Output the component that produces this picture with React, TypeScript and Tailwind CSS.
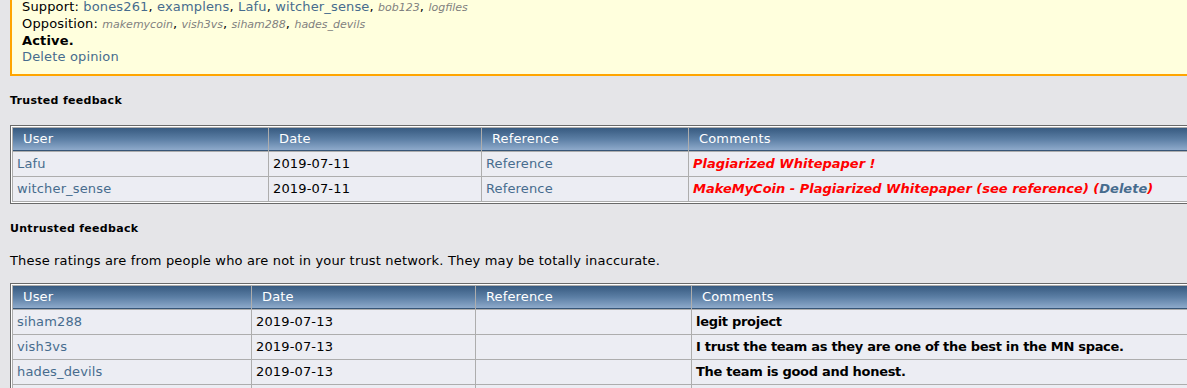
import React from "react";

const font = { fontFamily: '"DejaVu Sans", Verdana, sans-serif' };

type Row = { user: string; date: string; ref: boolean; comment: React.ReactNode };

function FeedbackTable({
  widths,
  rows,
}: {
  widths: [number, number, number, number];
  rows: Row[];
}) {
  const heads = ["User", "Date", "Reference", "Comments"];
  return (
    <div className="border border-[#696969] bg-white p-px w-max">
      <table
        className="table-fixed border-separate border-spacing-px bg-[#ADADAD] text-[13px] tracking-[0.15px]"
        style={{ width: widths.reduce((a, b) => a + b, 0) + 5 }}
      >
        <colgroup>
          {widths.map((w, i) => (
            <col key={i} style={{ width: w }} />
          ))}
        </colgroup>
        <thead>
          <tr>
            {heads.map((h) => (
              <th
                key={h}
                className="h-[23px] p-0 pl-[10px] text-left font-normal text-white leading-[16px] border-b border-[#375576] bg-[linear-gradient(to_bottom,#375a80,#5b7ea4_50%,#8eaacb)]"
              >
                {h}
              </th>
            ))}
          </tr>
        </thead>
        <tbody>
          {rows.map((r, i) => (
            <tr key={i}>
              <td className="h-[24px] px-[4px] py-0 bg-[#ECEDF3] leading-[16px] text-[#476C8E]">{r.user}</td>
              <td className="h-[24px] px-[4px] py-0 bg-[#ECEDF3] leading-[16px] text-black">{r.date}</td>
              <td className="h-[24px] px-[4px] py-0 bg-[#ECEDF3] leading-[16px] text-[#476C8E]">
                {r.ref ? "Reference" : ""}
              </td>
              <td className="h-[24px] px-[4px] py-0 bg-[#ECEDF3] leading-[16px] whitespace-nowrap">{r.comment}</td>
            </tr>
          ))}
        </tbody>
      </table>
    </div>
  );
}

export default function App() {
  const link = "text-[#476C8E]";
  const gray = "text-[11px] italic text-[#7F7F7F] tracking-normal";
  const red = "font-bold italic text-[#FF0000] tracking-normal";
  const bold = "font-bold tracking-[-0.3px]";
  return (
    <div className="w-[1187px] h-[388px] overflow-hidden bg-[#E5E5E8] text-black" style={font}>
      <div className="w-[1500px]">
        <div className="ml-[10px] bg-[#FFFFDD] border-l-2 border-b-2 border-[#FFA500] pl-[10px] pb-[9px] text-[13px] leading-[16px] tracking-[0.15px]">
          <div className="-mt-px">
            Support: <span className={link}>bones261</span>, <span className={link}>examplens</span>,{" "}
            <span className={link}>Lafu</span>, <span className={link}>witcher_sense</span>,{" "}
            <span className={gray}>bob123</span>, <span className={gray}>logfiles</span>
          </div>
          <div>
            Opposition: <span className={gray}>makemycoin</span>, <span className={gray}>vish3vs</span>,{" "}
            <span className={gray}>siham288</span>, <span className={gray}>hades_devils</span>
          </div>
          <div className="font-bold">Active.</div>
          <div className={link}>Delete opinion</div>
        </div>

        <div className="ml-[10px] mt-[18px] text-[11px] font-bold leading-[14px] tracking-[0.3px]">
          Trusted feedback
        </div>
        <div className="ml-[10px] mt-[17px]">
          <FeedbackTable
            widths={[255, 212, 206, 700]}
            rows={[
              {
                user: "Lafu",
                date: "2019-07-11",
                ref: true,
                comment: <span className={red}>Plagiarized Whitepaper !</span>,
              },
              {
                user: "witcher_sense",
                date: "2019-07-11",
                ref: true,
                comment: (
                  <span className={red}>
                    MakeMyCoin - Plagiarized Whitepaper (see reference) (
                    <span className="text-[#476C8E]">Delete</span>)
                  </span>
                ),
              },
            ]}
          />
        </div>

        <div className="ml-[10px] mt-[18px] text-[11px] font-bold leading-[14px] tracking-[0.3px]">
          Untrusted feedback
        </div>
        <div className="ml-[10px] mt-[17px] text-[13px] leading-[16px] tracking-[0.17px]">
          These ratings are from people who are not in your trust network. They may be totally inaccurate.
        </div>
        <div className="ml-[10px] mt-[14px]">
          <FeedbackTable
            widths={[238, 223, 215, 700]}
            rows={[
              {
                user: "siham288",
                date: "2019-07-13",
                ref: false,
                comment: <span className={bold}>legit project</span>,
              },
              {
                user: "vish3vs",
                date: "2019-07-13",
                ref: false,
                comment: (
                  <span className={bold}>I trust the team as they are one of the best in the MN space.</span>
                ),
              },
              {
                user: "hades_devils",
                date: "2019-07-13",
                ref: false,
                comment: <span className={bold}>The team is good and honest.</span>,
              },
              {
                user: "",
                date: "",
                ref: false,
                comment: "",
              },
            ]}
          />
        </div>
      </div>
    </div>
  );
}
